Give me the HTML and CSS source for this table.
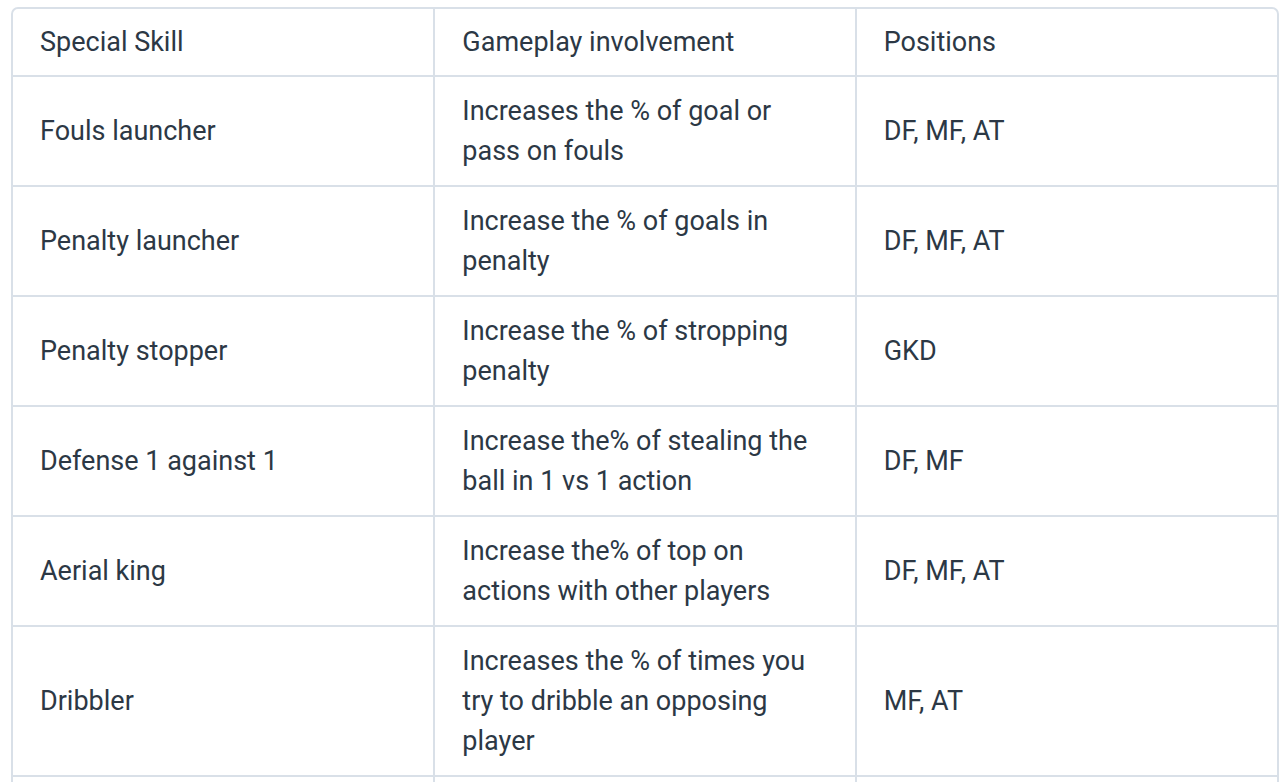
FILE: index.html
```html
<!DOCTYPE html>
<html lang="en">
<head>
<meta charset="utf-8">
<title>Special Skills</title>
<link rel="stylesheet" href="styles.css">
</head>
<body>
<div class="table-wrap">
<table class="skills">
<thead>
<tr><th>Special Skill</th><th>Gameplay involvement</th><th>Positions</th></tr>
</thead>
<tbody>
<tr><td>Fouls launcher</td><td>Increases the % of goal or pass on fouls</td><td>DF, MF, AT</td></tr>
<tr><td>Penalty launcher</td><td>Increase the % of goals in penalty</td><td>DF, MF, AT</td></tr>
<tr><td>Penalty stopper</td><td>Increase the % of stropping penalty</td><td>GKD</td></tr>
<tr><td>Defense 1 against 1</td><td>Increase the% of stealing the ball in 1 vs 1 action</td><td>DF, MF</td></tr>
<tr><td>Aerial king</td><td>Increase the% of top on actions with other players</td><td>DF, MF, AT</td></tr>
<tr><td>Dribbler</td><td>Increases the % of times you try to dribble an opposing player</td><td>MF, AT</td></tr>
<tr><td>Playmaker</td><td>Increase the % of successful passes</td><td>MF</td></tr>
</tbody>
</table>
</div>
</body>
</html>
```

FILE: styles.css
```css
html, body {
  margin: 0;
  padding: 0;
  background: #ffffff;
  overflow: hidden;
}
body {
  padding: 7px 1px 0 11px;
  font-family: Roboto, "Liberation Sans", sans-serif;
  color: #2c3845;
}
.table-wrap {
  border: 2px solid #d9e0e8;
  border-radius: 7px;
  overflow: hidden;
}
.skills {
  width: 100%;
  border-collapse: collapse;
  table-layout: fixed;
  font-size: 27px;
  line-height: 40px;
}
.skills th,
.skills td {
  text-align: left;
  font-weight: 400;
  vertical-align: middle;
  padding: 14px 30px 14px 27px;
  border-left: 2px solid #d9e0e8;
  border-top: 2px solid #d9e0e8;
}
.skills th {
  padding-top: 13px;
  padding-bottom: 13px;
}
.skills tr > :first-child {
  border-left: none;
}
.skills thead tr:first-child th {
  border-top: none;
}
```
